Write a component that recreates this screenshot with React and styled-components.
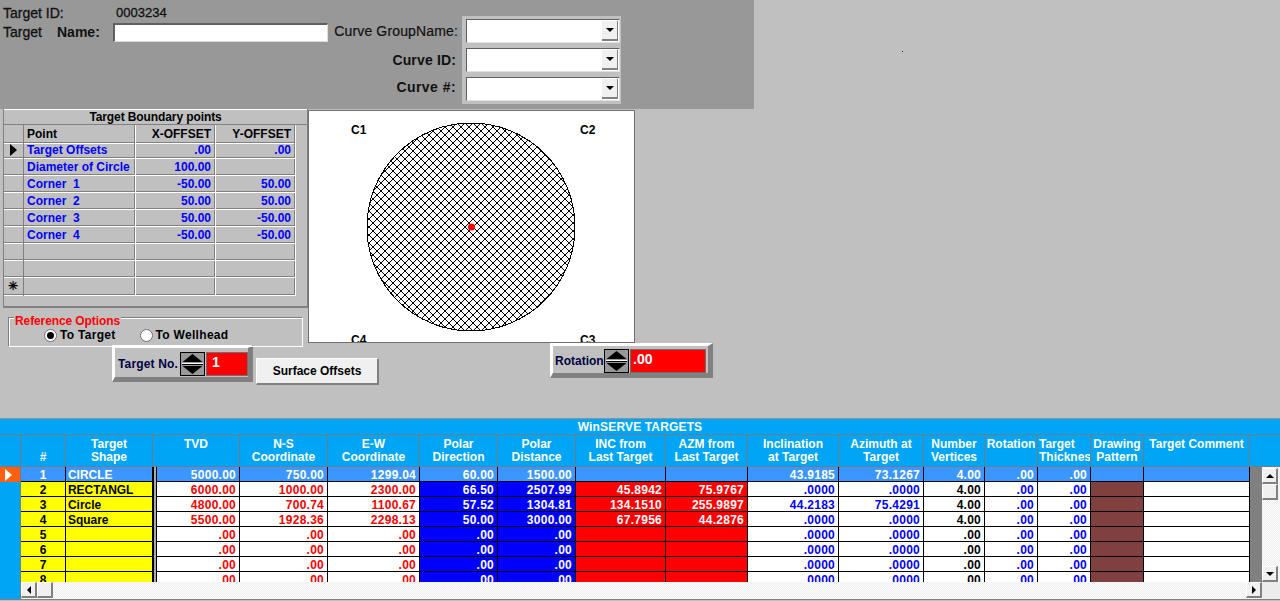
import styled, { createGlobalStyle } from "styled-components";

const Global = createGlobalStyle`
  html, body { margin: 0; padding: 0; background: #c0c0c0; overflow: hidden; }
  body { font-family: "Liberation Sans", Arial, sans-serif; font-size: 12px; font-weight: 700; }
  * { box-sizing: border-box; }
`;

const Page = styled.div`
  width: 1280px;
  height: 601px;
  display: flex;
  flex-direction: column;
  background: #c0c0c0;
  overflow: hidden;
`;

/* top form */
const TopRow = styled.div`
  height: 110px;
  flex: none;
  display: flex;
  position: relative;
`;
const Speck = styled.i`
  position: absolute;
  left: 902px;
  top: 51px;
  width: 1px;
  height: 1px;
  background: #222;
`;
const TopPanel = styled.div`
  width: 754px;
  height: 109px;
  background: #989898;
  display: flex;
  color: #111;
`;
const NameBlock = styled.div`
  width: 334px;
  padding: 5px 0 0 3px;
  flex: none;
`;
const IdRow = styled.div`
  display: flex;
  height: 17px;
  line-height: 16px;
  font-size: 14px;
  font-weight: 400;
  -webkit-text-stroke: 0.3px #111;
`;
const IdLabel = styled.span`
  width: ${(p) => p.$w}px;
  flex: none;
`;
const IdValue = styled.span`
  font-size: 13px;
`;
const NameRow = styled.div`
  display: flex;
  align-items: center;
  height: 20px;
  font-size: 14px;
  font-weight: 700;
`;
const NameWord = styled(IdLabel)`
  font-weight: ${(p) => p.$weight || 700};
  -webkit-text-stroke: ${(p) => (p.$weight ? "0.3px #111" : "0")};
`;
const TextField = styled.input`
  width: 215px;
  height: 19px;
  background: #fff;
  border: 1px solid #606060;
  border-right-color: #dcdcdc;
  border-bottom-color: #dcdcdc;
  border-top-width: 2px;
  border-left-width: 2px;
  padding: 0;
`;
const CurveLabels = styled.div`
  width: 124px;
  flex: none;
  display: flex;
  flex-direction: column;
  text-align: right;
  padding-top: 23px;
  font-size: 14px;
`;
const CurveLabel = styled.div`
  height: ${(p) => p.$h}px;
  line-height: 16px;
  padding-right: ${(p) => p.$pad || 0}px;
  font-weight: ${(p) => p.$weight || 700};
  letter-spacing: ${(p) => p.$track || 0.15}px;
  -webkit-text-stroke: ${(p) => (p.$weight ? "0.2px #111" : "0")};
  white-space: nowrap;
`;
const ComboGroup = styled.div`
  margin: 16px 0 0 4px;
  width: 159px;
  height: 88px;
  background: #c0c0c0;
  padding: 3px 1px 0 4px;
  display: flex;
  flex-direction: column;
  gap: 5px;
`;
const Combo = styled.div`
  height: 24px;
  background: #fff;
  border: 1px solid #606060;
  border-right-color: #e0e0e0;
  border-bottom-color: #e0e0e0;
  display: flex;
  justify-content: flex-end;
  padding: 1px;
`;
const ComboButton = styled.div`
  width: 16px;
  background: #f0f0f0;
  border-right: 1px solid #808080;
  border-bottom: 2px solid #808080;
  display: flex;
  align-items: center;
  justify-content: center;
`;
const Arrow = styled.i`
  width: 0;
  height: 0;
  display: block;
  border-style: solid;
  border-color: transparent;
  border-width: 4px;
  ${(p) => p.$dir === "down" && "border-top-color: #000; border-bottom-width: 0;"}
  ${(p) => p.$dir === "up" && "border-bottom-color: #000; border-top-width: 0;"}
  ${(p) => p.$dir === "left" && "border-right-color: #000; border-left-width: 0;"}
  ${(p) => p.$dir === "right" && "border-left-color: #000; border-right-width: 0;"}
`;

/* middle */
const MidRow = styled.div`
  height: 233px;
  flex: none;
  display: flex;
  padding-left: 3px;
`;
const LeftColumn = styled.div`
  width: 305px;
  flex: none;
  display: flex;
  flex-direction: column;
`;
const Boundary = styled.div`
  height: 199px;
  flex: none;
  margin-top: -1px;
  background: #c0c0c0;
  border-right: 1px solid #808080;
  border-bottom: 2px solid #808080;
  border-left: 1px solid #808080;
  display: flex;
  flex-direction: column;
  overflow: hidden;
`;
const BoundaryTitle = styled.div`
  height: 16px;
  flex: none;
  text-align: center;
  line-height: 15px;
  letter-spacing: -0.1px;
  color: #000;
  border-top: 1px solid #fff;
  border-bottom: 1px solid #808080;
`;
const PointRow = styled.div`
  display: grid;
  grid-template-columns: 20px 112px 80px 80px;
  height: 17px;
  flex: none;
`;
const PointCell = styled.div`
  line-height: ${(p) => (p.$head ? 19 : 16)}px;
  padding: 0 5px 0 3px;
  text-align: ${(p) => (p.$right ? "right" : "left")};
  color: ${(p) => (p.$head ? "#000" : "#0000ff")};
  white-space: pre;
  box-shadow: inset -1px -1px 0 #fff, inset -2px -2px 0 #808080;
`;
const SelectorCell = styled(PointCell)`
  display: flex;
  align-items: center;
  justify-content: center;
  padding: 0 2px 2px 0;
  box-shadow: inset -1px 0 0 #808080, inset 0 -1px 0 #fff, inset 0 -2px 0 #808080;
  color: #000;
`;

const Options = styled.div`
  position: relative;
  width: 295px;
  height: 30px;
  margin: 9px 0 0 5px;
  border: 1px solid #808080;
  border-right-color: #fff;
  border-bottom-color: #fff;
  box-shadow: inset 1px 1px 0 #fff;
  display: flex;
  align-items: flex-end;
  padding: 0 0 4px 35px;
  gap: 24px;
  flex: none;
`;
const Legend = styled.div`
  position: absolute;
  left: 5px;
  top: -3px;
  background: #c0c0c0;
  color: #ff0000;
  padding: 0 1px;
  line-height: 13px;
  font-size: 12px;
  letter-spacing: -0.1px;
`;
const RadioLabel = styled.div`
  display: flex;
  align-items: center;
  gap: 3px;
  color: #000;
  line-height: 14px;
  letter-spacing: 0.3px;
`;
const Radio = styled.span`
  width: 13px;
  height: 13px;
  border-radius: 50%;
  background: #fff;
  border: 1px solid #707070;
  display: flex;
  align-items: center;
  justify-content: center;
  &::after {
    content: "";
    width: 7px;
    height: 7px;
    border-radius: 50%;
    background: ${(p) => (p.$on ? "#000" : "transparent")};
  }
`;
const Canvas = styled.div`
  width: 327px;
  height: 233px;
  flex: none;
  background: #fff;
  border: 1px solid #707070;
  overflow: hidden;
`;
const CanvasLabel = styled.text`
  font-family: "Liberation Sans", Arial, sans-serif;
  font-size: 12px;
  font-weight: 700;
  fill: #000;
`;

const ControlRow = styled.div`
  height: 75px;
  flex: none;
  display: flex;
  align-items: flex-start;
  padding-left: 112px;
`;
const SpinBox = styled.div`
  display: flex;
  flex: none;
  width: ${(p) => p.$w}px;
  margin-top: ${(p) => p.$top}px;
  margin-left: ${(p) => p.$left || 0}px;
  padding: ${(p) => p.$pad}px 0 ${(p) => (p.$pad === 4 ? 1 : 0)}px ${(p) => p.$inset}px;
  background: #c0c0c0;
  border-style: solid;
  border-width: 3px 5px 5px 3px;
  border-color: #fff #808080 #808080 #fff;
  color: #000040;
`;
const SpinLabel = styled.div`
  width: ${(p) => p.$w}px;
  flex: none;
  line-height: 24px;
  font-size: 12px;
  letter-spacing: ${(p) => p.$track || 0}px;
  white-space: nowrap;
  overflow: hidden;
`;
const SpinButton = styled.div`
  width: 25px;
  height: 24px;
  flex: none;
  border: 1px solid #000;
  background: #989898;
`;
const SpinValue = styled.div`
  width: ${(p) => p.$w}px;
  height: 24px;
  flex: none;
  margin-left: 1px;
  background: #ff0000;
  border: 1px solid #707070;
  color: #fff;
  font-size: 14px;
  line-height: 19px;
  padding-left: ${(p) => p.$pad}px;
`;
const SurfaceButton = styled.button`
  width: 123px;
  height: 27px;
  flex: none;
  margin: 15px 0 0 3px;
  padding: 0;
  background: #f0f0f0;
  border-style: solid;
  border-width: 1px 2px 2px 1px;
  border-color: #fff #808080 #808080 #fff;
  font: inherit;
  color: #000;
`;

/* targets table */
const lineTone = "#6c7c88";
const Targets = styled.div`
  height: 182px;
  flex: none;
  background: #00a5f5;
  border-top: 1px solid #909090;
  border-bottom: 1px solid #808080;
  display: flex;
  flex-direction: column;
  color: #fff;
`;
const TargetsTitle = styled.div`
  height: 16px;
  flex: none;
  line-height: 17px;
  text-align: center;
  letter-spacing: 0.15px;
  border-bottom: 1px solid ${lineTone};
  overflow: hidden;
`;
const columns =
  "21px 45px 87px 4px 83px 88px 92px 78px 78px 90px 82px 91px 85px 61px 53px 53px 53px 106px";
const HeaderRow = styled.div`
  display: grid;
  grid-template-columns: ${columns} 30px;
  height: 32px;
  flex: none;
  border-bottom: 1px solid ${lineTone};
`;
const HeaderCell = styled.div`
  grid-column: span ${(p) => p.$span || 1};
  border-right: 1px solid ${lineTone};
  padding: 3px 1px 0;
  line-height: 13px;
  text-align: ${(p) => (p.$left ? "left" : "center")};
  white-space: pre;
  overflow: hidden;
`;
const TargetsBody = styled.div`
  height: 115px;
  flex: none;
  display: flex;
`;
const Rows = styled.div`
  width: 1250px;
  flex: none;
  overflow: hidden;
`;
const DataRow = styled.div`
  display: grid;
  grid-template-columns: ${columns};
  height: 15px;
`;
const RowMark = styled.div`
  background: ${(p) => (p.$current ? "#ff6010" : "#00a5f5")};
  border-right: 1px solid ${lineTone};
  display: flex;
  align-items: center;
  justify-content: center;
  padding-right: 3px;
`;
const Gap = styled.div`
  background: #a8a8a8;
  border-left: 1px solid #000;
  border-right: 1px solid #000;
`;
const DataCell = styled.div`
  background: ${(p) => (p.$current ? "#3c96ff" : p.$bg)};
  color: ${(p) => (p.$current ? "#fff" : p.$fg)};
  border-right: 1px solid #000;
  border-bottom: 1px solid #000;
  text-align: ${(p) => p.$align};
  padding: 0 ${(p) => (p.$align === "right" ? 3 : 2)}px 0 2px;
  line-height: 17px;
  font-size: 12px;
  letter-spacing: ${(p) => (p.$align === "right" ? 0.25 : -0.05)}px;
  white-space: nowrap;
  overflow: hidden;
`;
const Gutter = styled.div`
  width: 12px;
  flex: none;
  background: #808080;
`;
const VScroll = styled.div`
  width: 18px;
  flex: none;
  display: flex;
  flex-direction: column;
  padding: 1px 2px 0 0;
  background: repeating-conic-gradient(#fff 0 25%, #ececec 0 50%) 0 0 / 2px 2px;
`;
const ScrollButton = styled.div`
  width: 16px;
  height: 16px;
  flex: none;
  background: #f0f0f0;
  border-style: solid;
  border-width: 1px 2px 2px 1px;
  border-color: #fff #808080 #808080 #fff;
  display: flex;
  align-items: center;
  justify-content: center;
  margin-top: ${(p) => (p.$end ? "auto" : "0")};
  margin-left: ${(p) => (p.$push ? "auto" : "0")};
`;
const ScrollRow = styled.div`
  height: 17px;
  flex: none;
  display: flex;
`;
const MarkFill = styled.div`
  width: 21px;
  flex: none;
  border-right: 1px solid ${lineTone};
`;
const HScroll = styled.div`
  width: 1241px;
  flex: none;
  display: flex;
  background: repeating-conic-gradient(#fff 0 25%, #ececec 0 50%) 0 0 / 2px 2px;
`;
const Corner = styled.div`
  flex: 1;
  background: #ececec;
`;

const points = [
  ["Target Offsets", ".00", ".00"],
  ["Diameter of Circle", "100.00", ""],
  ["Corner  1", "-50.00", "50.00"],
  ["Corner  2", "50.00", "50.00"],
  ["Corner  3", "50.00", "-50.00"],
  ["Corner  4", "-50.00", "-50.00"],
  ["", "", ""],
  ["", "", ""],
  ["", "", ""],
];

const headers = [
  { text: "" },
  { text: "\n#" },
  { text: "Target\nShape" },
  { text: "TVD", span: 2 },
  { text: "N-S\nCoordinate" },
  { text: "E-W\nCoordinate" },
  { text: "Polar\nDirection" },
  { text: "Polar\nDistance" },
  { text: "INC from\nLast Target" },
  { text: "AZM from\nLast Target" },
  { text: "Inclination\nat Target" },
  { text: "Azimuth at\nTarget" },
  { text: "Number\nVertices" },
  { text: "Rotation" },
  { text: "Target\nThickness", left: true },
  { text: "Drawing\nPattern" },
  { text: "Target Comment" },
];

const cols = [
  { bg: "#ffff00", fg: "#000", align: "center" },
  { bg: "#ffff00", fg: "#000", align: "left" },
  { bg: "#fff", fg: "#ff0000", align: "right" },
  { bg: "#fff", fg: "#ff0000", align: "right" },
  { bg: "#fff", fg: "#ff0000", align: "right" },
  { bg: "#0000ff", fg: "#fff", align: "right" },
  { bg: "#0000ff", fg: "#fff", align: "right" },
  { bg: "#ff0000", fg: "#fff", align: "right" },
  { bg: "#ff0000", fg: "#fff", align: "right" },
  { bg: "#fff", fg: "#0000ff", align: "right" },
  { bg: "#fff", fg: "#0000ff", align: "right" },
  { bg: "#fff", fg: "#000", align: "right" },
  { bg: "#fff", fg: "#0000ff", align: "right" },
  { bg: "#fff", fg: "#0000ff", align: "right" },
  { bg: "#804040", fg: "#fff", align: "right" },
  { bg: "#fff", fg: "#000", align: "left" },
];

const emptyRow = (n) => [n, "", ".00", ".00", ".00", ".00", ".00", "", "", ".0000", ".0000", ".00", ".00", ".00", "", ""];

const rows = [
  ["1", "CIRCLE", "5000.00", "750.00", "1299.04", "60.00", "1500.00", "", "", "43.9185", "73.1267", "4.00", ".00", ".00", "", ""],
  ["2", "RECTANGL", "6000.00", "1000.00", "2300.00", "66.50", "2507.99", "45.8942", "75.9767", ".0000", ".0000", "4.00", ".00", ".00", "", ""],
  ["3", "Circle", "4800.00", "700.74", "1100.67", "57.52", "1304.81", "134.1510", "255.9897", "44.2183", "75.4291", "4.00", ".00", ".00", "", ""],
  ["4", "Square", "5500.00", "1928.36", "2298.13", "50.00", "3000.00", "67.7956", "44.2876", ".0000", ".0000", "4.00", ".00", ".00", "", ""],
  emptyRow("5"),
  emptyRow("6"),
  emptyRow("7"),
  emptyRow("8"),
];

// 8x8 diagonal cross brush, one pixel per step
const brush = Array.from({ length: 8 }, (_, i) => `M${i} ${i}h1v1h-1z M${7 - i} ${i}h1v1h-1z`).join(" ");

const SpinIcon = () => (
  <SpinButton>
    <svg width="23" height="22" viewBox="0 0 23 22">
      <path d="M11.5 1 L21.5 9 L1.5 9 Z" fill="#000" />
      <rect x="1" y="10" width="21" height="1" fill="#fff" />
      <rect x="1" y="11" width="21" height="1" fill="#000" />
      <path d="M1.5 13 L21.5 13 L11.5 21 Z" fill="#000" />
    </svg>
  </SpinButton>
);

const Hatch = () => (
  <svg width="325" height="231" viewBox="0 0 325 231">
    <defs>
      <pattern id="cross" width="8" height="8" patternUnits="userSpaceOnUse">
        <path d={brush} fill="#000" shapeRendering="crispEdges" />
      </pattern>
    </defs>
    <circle cx="162" cy="116" r="104" fill="url(#cross)" stroke="#000" strokeWidth="1" shapeRendering="crispEdges" />
    <circle cx="162.5" cy="116" r="3.5" fill="#ff0000" />
    <CanvasLabel x="42" y="23">C1</CanvasLabel>
    <CanvasLabel x="271" y="23">C2</CanvasLabel>
    <CanvasLabel x="42" y="233">C4</CanvasLabel>
    <CanvasLabel x="271" y="233">C3</CanvasLabel>
  </svg>
);

const App = () => {
  return (
    <Page>
      <Global />
      <TopRow>
        <TopPanel>
          <NameBlock>
            <IdRow>
              <IdLabel $w={113}>Target ID:</IdLabel>
              <IdValue>0003234</IdValue>
            </IdRow>
            <NameRow>
              <NameWord $w={54} $weight={400}>Target</NameWord>
              <NameWord $w={56}>Name:</NameWord>
              <TextField />
            </NameRow>
          </NameBlock>
          <CurveLabels>
            <CurveLabel $h={29} $weight={400}>Curve GroupName:</CurveLabel>
            <CurveLabel $h={27} $pad={2}>Curve ID:</CurveLabel>
            <CurveLabel $h={20} $pad={2} $track={0.45}>Curve #:</CurveLabel>
          </CurveLabels>
          <ComboGroup>
            {[0, 1, 2].map((n) => (
              <Combo key={n}>
                <ComboButton><Arrow $dir="down" /></ComboButton>
              </Combo>
            ))}
          </ComboGroup>
        </TopPanel>
        <Speck />
      </TopRow>

      <MidRow>
        <LeftColumn>
          <Boundary>
            <BoundaryTitle>Target Boundary points</BoundaryTitle>
            <PointRow>
              <SelectorCell />
              <PointCell $head>Point</PointCell>
              <PointCell $head $right>X-OFFSET</PointCell>
              <PointCell $head $right>Y-OFFSET</PointCell>
            </PointRow>
            {points.map((p, i) => (
              <PointRow key={i}>
                <SelectorCell>
                  {i === 0 && (
                    <svg width="7" height="12" viewBox="0 0 7 12"><path d="M0 0 L7 6 L0 12 Z" fill="#000" /></svg>
                  )}
                  {i === 8 && "✳"}
                </SelectorCell>
                <PointCell>{p[0]}</PointCell>
                <PointCell $right>{p[1]}</PointCell>
                <PointCell $right>{p[2]}</PointCell>
              </PointRow>
            ))}
          </Boundary>
          <Options>
            <Legend>Reference Options</Legend>
            <RadioLabel><Radio $on />To Target</RadioLabel>
            <RadioLabel><Radio />To Wellhead</RadioLabel>
          </Options>
        </LeftColumn>
        <Canvas><Hatch /></Canvas>
      </MidRow>

      <ControlRow>
        <SpinBox $w={141} $top={2} $pad={4} $inset={3}>
          <SpinLabel $w={62} $track={0.15}>Target No.</SpinLabel>
          <SpinIcon />
          <SpinValue $w={42} $pad={5}>1</SpinValue>
        </SpinBox>
        <SurfaceButton>Surface Offsets</SurfaceButton>
        <SpinBox $w={163} $top={0} $left={171} $pad={3} $inset={2}>
          <SpinLabel $w={49}>Rotation</SpinLabel>
          <SpinIcon />
          <SpinValue $w={76} $pad={2}>.00</SpinValue>
        </SpinBox>
      </ControlRow>

      <Targets>
        <TargetsTitle>WinSERVE TARGETS</TargetsTitle>
        <HeaderRow>
          {headers.map((h, i) => (
            <HeaderCell key={i} $span={h.span} $left={h.left}>{h.text}</HeaderCell>
          ))}
          <div />
        </HeaderRow>
        <TargetsBody>
          <Rows>
            {rows.map((row, r) => (
              <DataRow key={r}>
                <RowMark $current={r === 0}>
                  {r === 0 && (
                    <svg width="7" height="12" viewBox="0 0 7 12"><path d="M0 0 L7 6 L0 12 Z" fill="#fff" /></svg>
                  )}
                </RowMark>
                {row.flatMap((value, c) => {
                  const cell = (
                    <DataCell key={c} $bg={cols[c].bg} $fg={cols[c].fg} $align={cols[c].align} $current={r === 0}>
                      {value}
                    </DataCell>
                  );
                  return c === 1 ? [cell, <Gap key="gap" />] : [cell];
                })}
              </DataRow>
            ))}
          </Rows>
          <Gutter />
          <VScroll>
            <ScrollButton><Arrow $dir="up" /></ScrollButton>
            <ScrollButton />
            <ScrollButton $end><Arrow $dir="down" /></ScrollButton>
          </VScroll>
        </TargetsBody>
        <ScrollRow>
          <MarkFill />
          <HScroll>
            <ScrollButton><Arrow $dir="left" /></ScrollButton>
            <ScrollButton />
            <ScrollButton $push><Arrow $dir="right" /></ScrollButton>
          </HScroll>
          <Corner />
        </ScrollRow>
      </Targets>
    </Page>
  );
};

export default App;
